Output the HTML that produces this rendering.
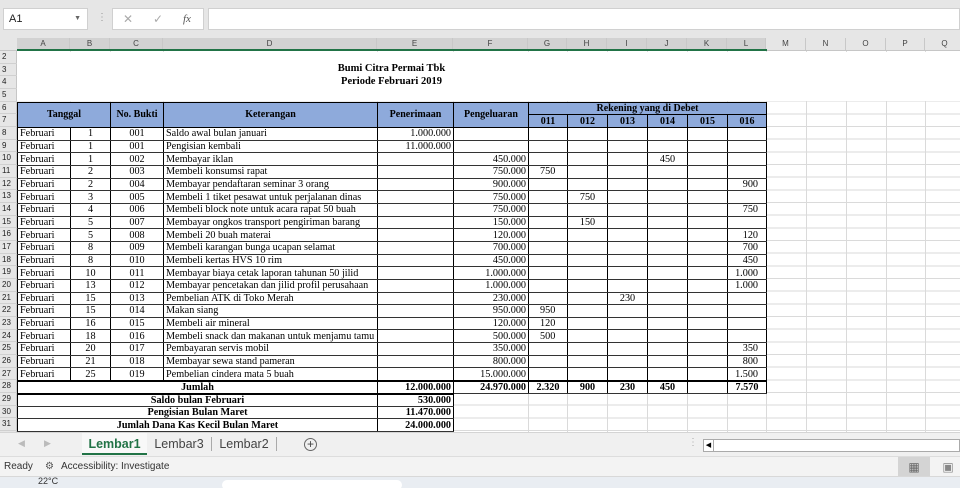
<!DOCTYPE html>
<html><head><meta charset="utf-8">
<style>
*{margin:0;padding:0;box-sizing:border-box}
body{width:960px;height:488px;overflow:hidden;background:#fff;position:relative;font-family:"Liberation Sans",sans-serif}
.abs{position:absolute}
#fbar{left:0;top:0;width:960px;height:38px;background:#e6e6e6}
#grid{left:17px;top:51px;width:943px;height:381px;
 background-image:repeating-linear-gradient(to bottom,transparent 0,transparent 11.667px,#dadada 11.667px,#dadada 12.667px);}
.vl{position:absolute;top:51px;height:381px;width:1px;background:#dadada}
#colh{left:0;top:38px;width:960px;height:13px;background:#e6e6e6;border-bottom:1px solid #c6c6c6}
.ch{position:absolute;top:38px;height:12px;font-size:8px;color:#444;text-align:center;line-height:12px;border-right:1px solid #c8c8c8}
.ch.sel{background:#d2d2d2;color:#444}
#rowh{left:0;top:51px;width:17px;height:381px;background:#e6e6e6;border-right:1px solid #c6c6c6}
.rn{position:absolute;left:0;width:17px;height:12.667px;font-size:8px;line-height:12.667px;color:#222;padding-left:2px;border-bottom:1px solid #d0d0d0}
.title{position:absolute;left:17px;width:749px;text-align:center;font-family:"Liberation Serif",serif;font-weight:bold;font-size:10.5px;line-height:12.667px}
table{position:absolute;left:17px;top:101.67px;border-collapse:collapse;table-layout:fixed;font-family:"Liberation Serif",serif;font-size:10.2px;color:#000}
td{height:12.667px;line-height:11px;padding:0 2px;white-space:nowrap;overflow:hidden;border-left:1px solid #000;border-right:1px solid #000;border-bottom:1px solid #333;background:#fff}
.h td{background:#8eaadb;font-weight:bold;text-align:center;border:1px solid #000;font-size:10px}
.c{text-align:center}.r{text-align:right}
.g{padding-left:11px}.l{text-align:right;padding-right:8px}
.b td{font-weight:bold}
.t{border-top:2px solid #000}
.n{background:transparent!important;border:none!important}
</style></head><body>
<div id="fbar" class="abs">
 <div class="abs" style="left:3px;top:8px;width:85px;height:22px;background:#fff;border:1px solid #d0d0d0;font-size:11px;line-height:20px;padding-left:5px;color:#222">A1<span style="position:absolute;right:6px;font-size:7px;color:#666">▼</span></div>
 <div class="abs" style="left:97px;top:12px;font-size:10px;color:#999">⋮</div>
 <div class="abs" style="left:112px;top:8px;width:92px;height:22px;background:#fff;border:1px solid #d0d0d0;font-size:12px;color:#aaa;line-height:20px"><span style="position:absolute;left:10px">✕</span><span style="position:absolute;left:40px">✓</span><span style="position:absolute;left:70px;color:#555;font-family:'Liberation Serif',serif;font-style:italic;font-size:11px">fx</span></div>
 <div class="abs" style="left:208px;top:8px;width:752px;height:22px;background:#fff;border:1px solid #d0d0d0"></div>
</div>
<div id="colh" class="abs"></div>
<div class="ch sel" style="left:17px;width:53px">A</div>
<div class="ch sel" style="left:70px;width:40px">B</div>
<div class="ch sel" style="left:110px;width:53px">C</div>
<div class="ch sel" style="left:163px;width:214px">D</div>
<div class="ch sel" style="left:377px;width:76px">E</div>
<div class="ch sel" style="left:453px;width:75px">F</div>
<div class="ch sel" style="left:528px;width:39px">G</div>
<div class="ch sel" style="left:567px;width:40px">H</div>
<div class="ch sel" style="left:607px;width:40px">I</div>
<div class="ch sel" style="left:647px;width:40px">J</div>
<div class="ch sel" style="left:687px;width:40px">K</div>
<div class="ch sel" style="left:727px;width:39px">L</div>
<div class="ch" style="left:766px;width:40px">M</div>
<div class="ch" style="left:806px;width:40px">N</div>
<div class="ch" style="left:846px;width:40px">O</div>
<div class="ch" style="left:886px;width:39px">P</div>
<div class="ch" style="left:925px;width:40px">Q</div>
<div class="abs" style="left:17px;top:49px;width:750px;height:2px;background:#217346"></div>

<div id="grid" class="abs"></div>
<div class="vl" style="left:70px"></div><div class="vl" style="left:110px"></div><div class="vl" style="left:163px"></div><div class="vl" style="left:377px"></div><div class="vl" style="left:453px"></div><div class="vl" style="left:528px"></div><div class="vl" style="left:567px"></div><div class="vl" style="left:607px"></div><div class="vl" style="left:647px"></div><div class="vl" style="left:687px"></div><div class="vl" style="left:727px"></div><div class="vl" style="left:766px"></div><div class="vl" style="left:806px"></div><div class="vl" style="left:846px"></div><div class="vl" style="left:886px"></div><div class="vl" style="left:925px"></div>
<div class="abs" style="left:17px;top:52px;width:943px;height:24px;background:#fff"></div>
<div class="abs" style="left:17px;top:76.3px;width:943px;height:25px;background:#fff"></div>
<div class="title" style="top:63.3px">Bumi Citra Permai Tbk</div>
<div class="title" style="top:76px">Periode Februari 2019</div>

<div id="rowh" class="abs">
<div class="rn" style="top:0">2</div><div class="rn" style="top:12.667px">3</div><div class="rn" style="top:25.333px">4</div><div class="rn" style="top:38px">5</div><div class="rn" style="top:50.667px">6</div><div class="rn" style="top:63.333px">7</div><div class="rn" style="top:76px">8</div><div class="rn" style="top:88.667px">9</div><div class="rn" style="top:101.333px">10</div><div class="rn" style="top:114px">11</div><div class="rn" style="top:126.667px">12</div><div class="rn" style="top:139.333px">13</div><div class="rn" style="top:152px">14</div><div class="rn" style="top:164.667px">15</div><div class="rn" style="top:177.333px">16</div><div class="rn" style="top:190px">17</div><div class="rn" style="top:202.667px">18</div><div class="rn" style="top:215.333px">19</div><div class="rn" style="top:228px">20</div><div class="rn" style="top:240.667px">21</div><div class="rn" style="top:253.333px">22</div><div class="rn" style="top:266px">23</div><div class="rn" style="top:278.667px">24</div><div class="rn" style="top:291.333px">25</div><div class="rn" style="top:304px">26</div><div class="rn" style="top:316.667px">27</div><div class="rn" style="top:329.333px">28</div><div class="rn" style="top:342px">29</div><div class="rn" style="top:354.667px">30</div><div class="rn" style="top:367.333px">31</div>
</div>

<table>
<colgroup><col style="width:53px"><col style="width:40px"><col style="width:53px"><col style="width:214px"><col style="width:76px"><col style="width:75px"><col style="width:39px"><col style="width:40px"><col style="width:40px"><col style="width:40px"><col style="width:40px"><col style="width:39px"></colgroup>
<tr class="h"><td colspan="2" rowspan="2">Tanggal</td><td rowspan="2">No. Bukti</td><td rowspan="2">Keterangan</td><td rowspan="2">Penerimaan</td><td rowspan="2">Pengeluaran</td><td colspan="6">Rekening yang di Debet</td></tr>
<tr class="h"><td>011</td><td>012</td><td>013</td><td>014</td><td>015</td><td>016</td></tr>
<tr><td>Februari</td><td class="c">1</td><td class="c">001</td><td>Saldo awal bulan januari</td><td class="r">1.000.000</td><td></td><td></td><td></td><td></td><td></td><td></td><td></td></tr>
<tr><td>Februari</td><td class="c">1</td><td class="c">001</td><td>Pengisian kembali</td><td class="r">11.000.000</td><td></td><td></td><td></td><td></td><td></td><td></td><td></td></tr>
<tr><td>Februari</td><td class="c">1</td><td class="c">002</td><td>Membayar iklan</td><td></td><td class="r">450.000</td><td></td><td></td><td></td><td class="c">450</td><td></td><td></td></tr>
<tr><td>Februari</td><td class="c">2</td><td class="c">003</td><td>Membeli konsumsi rapat</td><td></td><td class="r">750.000</td><td class="g">750</td><td></td><td></td><td></td><td></td><td></td></tr>
<tr><td>Februari</td><td class="c">2</td><td class="c">004</td><td>Membayar pendaftaran seminar 3 orang</td><td></td><td class="r">900.000</td><td></td><td></td><td></td><td></td><td></td><td class="l">900</td></tr>
<tr><td>Februari</td><td class="c">3</td><td class="c">005</td><td>Membeli 1 tiket pesawat untuk perjalanan dinas</td><td></td><td class="r">750.000</td><td></td><td class="c">750</td><td></td><td></td><td></td><td></td></tr>
<tr><td>Februari</td><td class="c">4</td><td class="c">006</td><td>Membeli block note untuk acara rapat 50 buah</td><td></td><td class="r">750.000</td><td></td><td></td><td></td><td></td><td></td><td class="l">750</td></tr>
<tr><td>Februari</td><td class="c">5</td><td class="c">007</td><td>Membayar ongkos transport pengiriman barang</td><td></td><td class="r">150.000</td><td></td><td class="c">150</td><td></td><td></td><td></td><td></td></tr>
<tr><td>Februari</td><td class="c">5</td><td class="c">008</td><td>Membeli 20 buah materai</td><td></td><td class="r">120.000</td><td></td><td></td><td></td><td></td><td></td><td class="l">120</td></tr>
<tr><td>Februari</td><td class="c">8</td><td class="c">009</td><td>Membeli karangan bunga ucapan selamat</td><td></td><td class="r">700.000</td><td></td><td></td><td></td><td></td><td></td><td class="l">700</td></tr>
<tr><td>Februari</td><td class="c">8</td><td class="c">010</td><td>Membeli kertas HVS 10 rim</td><td></td><td class="r">450.000</td><td></td><td></td><td></td><td></td><td></td><td class="l">450</td></tr>
<tr><td>Februari</td><td class="c">10</td><td class="c">011</td><td>Membayar biaya cetak laporan tahunan 50 jilid</td><td></td><td class="r">1.000.000</td><td></td><td></td><td></td><td></td><td></td><td class="l">1.000</td></tr>
<tr><td>Februari</td><td class="c">13</td><td class="c">012</td><td>Membayar pencetakan dan jilid profil perusahaan</td><td></td><td class="r">1.000.000</td><td></td><td></td><td></td><td></td><td></td><td class="l">1.000</td></tr>
<tr><td>Februari</td><td class="c">15</td><td class="c">013</td><td>Pembelian ATK di Toko Merah</td><td></td><td class="r">230.000</td><td></td><td></td><td class="c">230</td><td></td><td></td><td></td></tr>
<tr><td>Februari</td><td class="c">15</td><td class="c">014</td><td>Makan siang</td><td></td><td class="r">950.000</td><td class="g">950</td><td></td><td></td><td></td><td></td><td></td></tr>
<tr><td>Februari</td><td class="c">16</td><td class="c">015</td><td>Membeli air mineral</td><td></td><td class="r">120.000</td><td class="g">120</td><td></td><td></td><td></td><td></td><td></td></tr>
<tr><td>Februari</td><td class="c">18</td><td class="c">016</td><td>Membeli snack dan makanan untuk menjamu tamu</td><td></td><td class="r">500.000</td><td class="g">500</td><td></td><td></td><td></td><td></td><td></td></tr>
<tr><td>Februari</td><td class="c">20</td><td class="c">017</td><td>Pembayaran servis mobil</td><td></td><td class="r">350.000</td><td></td><td></td><td></td><td></td><td></td><td class="l">350</td></tr>
<tr><td>Februari</td><td class="c">21</td><td class="c">018</td><td>Membayar sewa stand pameran</td><td></td><td class="r">800.000</td><td></td><td></td><td></td><td></td><td></td><td class="l">800</td></tr>
<tr><td>Februari</td><td class="c">25</td><td class="c">019</td><td>Pembelian cindera mata 5 buah</td><td></td><td class="r">15.000.000</td><td></td><td></td><td></td><td></td><td></td><td class="l">1.500</td></tr>
<tr class="b"><td colspan="4" class="c t">Jumlah</td><td class="r t">12.000.000</td><td class="r t">24.970.000</td><td class="c t">2.320</td><td class="c t">900</td><td class="c t">230</td><td class="c t">450</td><td class="t"></td><td class="c t">7.570</td></tr>
<tr class="b"><td colspan="4" class="c t">Saldo bulan Februari</td><td class="r t">530.000</td><td class="n" colspan="7"></td></tr>
<tr class="b"><td colspan="4" class="c">Pengisian Bulan Maret</td><td class="r">11.470.000</td><td class="n" colspan="7"></td></tr>
<tr class="b"><td colspan="4" class="c">Jumlah Dana Kas Kecil Bulan Maret</td><td class="r">24.000.000</td><td class="n" colspan="7"></td></tr>
</table>

<div class="abs" style="left:0;top:432px;width:960px;height:24px;background:#f0f0f0;border-top:1px solid #d4d4d4;font-size:12.5px;color:#444">
 <span class="abs" style="left:18px;top:5px;color:#bbb;font-size:9px">◀</span><span class="abs" style="left:44px;top:5px;color:#bbb;font-size:9px">▶</span>
 <div class="abs" style="left:82px;top:0;width:65px;height:22px;background:#f8f8f8;border-bottom:2px solid #217346;color:#217346;font-weight:bold;text-align:center;line-height:22px">Lembar1</div>
 <div class="abs" style="left:147px;top:0;width:64px;height:22px;text-align:center;line-height:22px">Lembar3</div>
 <div class="abs" style="left:211px;top:4px;width:1px;height:14px;background:#aaa"></div>
 <div class="abs" style="left:212px;top:0;width:64px;height:22px;text-align:center;line-height:22px">Lembar2</div>
 <div class="abs" style="left:276px;top:4px;width:1px;height:14px;background:#aaa"></div>
 <div class="abs" style="left:304px;top:5px;width:13px;height:13px;border:1px solid #666;border-radius:50%;text-align:center;line-height:11px;font-size:12px">+</div>
 <span class="abs" style="left:688px;top:4px;color:#aaa;font-size:10px">⋮</span>
 <div class="abs" style="left:703px;top:6px;width:257px;height:13px;background:#fff;border:1px solid #aaa"><div style="width:10px;height:11px;border-right:1px solid #aaa;font-size:7px;line-height:11px;text-align:center;color:#000">◀</div></div>
</div>
<div class="abs" style="left:0;top:456px;width:960px;height:20px;background:#f3f3f3;border-top:1px solid #ddd;font-size:10px;color:#333;line-height:20px">
 <span class="abs" style="left:4px">Ready</span>
 <span class="abs" style="left:45px;color:#555">⚙</span>
 <span class="abs" style="left:61px">Accessibility: Investigate</span>
 <div class="abs" style="left:898px;top:0;width:32px;height:20px;background:#d4d4d4;text-align:center;color:#666;font-size:12px">▦</div>
 <div class="abs" style="left:938px;top:0;width:20px;height:20px;text-align:center;color:#888;font-size:12px">▣</div>
</div>
<div class="abs" style="left:0;top:476px;width:960px;height:12px;background:#e9edf2;border-top:1px solid #d8d8d8">
 <span class="abs" style="left:38px;top:-1px;font-size:9px;color:#333">22°C</span>
 <div class="abs" style="left:222px;top:3px;width:180px;height:10px;background:#fff;border-radius:6px"></div>
</div>
</body></html>
